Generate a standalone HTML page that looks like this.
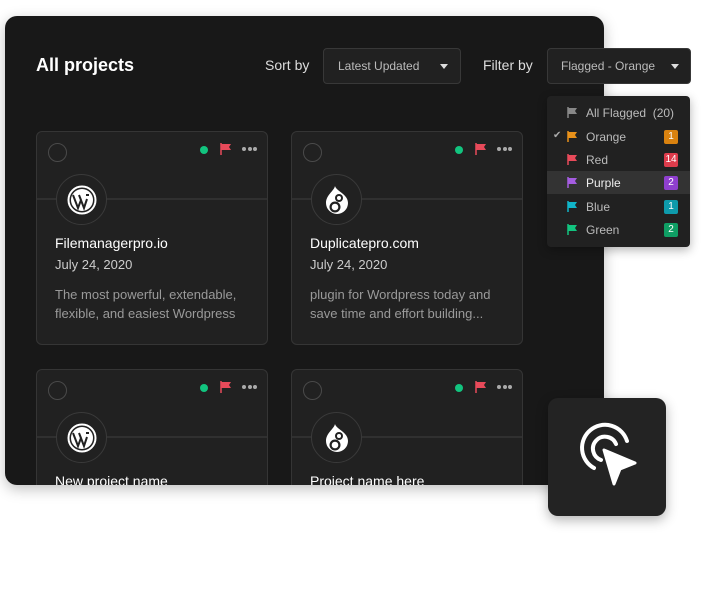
<!DOCTYPE html>
<html><head><meta charset="utf-8"><style>
*{box-sizing:border-box;margin:0;padding:0}
body{width:725px;height:615px;background:#fff;position:relative;overflow:hidden;font-family:"Liberation Sans",sans-serif}
.panel{position:absolute;left:5px;top:16px;width:599px;height:469px;background:#181818;border-radius:12px;overflow:hidden;box-shadow:0 4px 14px rgba(0,0,0,.25)}
.abs{position:absolute}
.card{position:absolute;width:232px;height:214px;background:#212121;border:1px solid #353535;border-radius:6px}
.chk{position:absolute;left:11px;top:11px;width:19px;height:19px;border:1.5px solid #4a4a4a;border-radius:50%}
.dot{position:absolute;left:163px;top:14px;width:8px;height:8px;border-radius:50%;background:#12c47f}
.flag{position:absolute;left:183px;top:11px}
.more{position:absolute;left:205px;top:15px;display:flex;gap:1.5px;height:4px}
.more i{display:block;width:4px;height:4px;border-radius:50%;background:#aaa}
.line{position:absolute;left:0;right:0;top:66px;height:2px;background:#303030}
.logo{position:absolute;left:19px;top:42px;width:51px;height:51px;border-radius:50%;border:1px solid #3a3a3a;background:#212121;display:flex;align-items:center;justify-content:center}
.t{position:absolute;left:18px;top:103px;color:#fff;font-size:14px}
.d{position:absolute;left:18px;top:125px;color:#ccc;font-size:13px}
.p{position:absolute;left:18px;top:153px;color:#9a9a9a;font-size:13px;line-height:19px}
.btn{position:absolute;background:#212121;border:1px solid #383838;border-radius:4px;color:#bbb;font-size:12px}
.menu{position:absolute;left:547px;top:96px;width:143px;height:151px;background:#212121;border-radius:4px;box-shadow:0 3px 10px rgba(0,0,0,.3)}
.it{position:absolute;left:0;width:143px;height:23px;font-size:12px;color:#bbb}
.it span.n{position:absolute;left:39px;top:5px}
.it svg{position:absolute;left:20px;top:6px}
.b{position:absolute;left:117px;top:5px;width:14px;height:14px;border-radius:2px;color:#fff;font-size:10px;text-align:center;line-height:14px}
</style></head><body>
<div class="panel">
<div class="abs" style="left:31px;top:39px;color:#fff;font-size:18px;font-weight:bold">All projects</div>
<div class="abs" style="left:260px;top:41px;color:#ddd;font-size:14px">Sort by</div>
<div class="abs" style="left:478px;top:41px;color:#ddd;font-size:14px">Filter by</div>
</div>
<div class="btn" style="left:323px;top:48px;width:138px;height:36px"><span class="abs" style="left:14px;top:10px">Latest Updated</span><span class="abs" style="left:116px;top:15px;width:0;height:0;border-left:4px solid transparent;border-right:4px solid transparent;border-top:5px solid #ddd"></span></div>
<div class="btn" style="left:547px;top:48px;width:144px;height:36px"><span class="abs" style="left:13px;top:10px">Flagged - Orange</span><span class="abs" style="left:123px;top:15px;width:0;height:0;border-left:4px solid transparent;border-right:4px solid transparent;border-top:5px solid #ddd"></span></div>

<div class="card" style="left:36px;top:131px">
<div class="chk"></div><div class="dot"></div>
<svg class="flag" width="11" height="12"><path d="M1 0v12" stroke="#e84a5a" stroke-width="1.5"/><path d="M1 1h10l-2 3 2 3H1z" fill="#e84a5a"/></svg>
<div class="more"><i></i><i></i><i></i></div><div class="line"></div>
<div class="logo"><svg width="30" height="30" viewBox="0 0 30 30"><circle cx="15" cy="15" r="13.5" fill="none" stroke="#fff" stroke-width="2"/><circle cx="15" cy="15" r="11" fill="#fff"/><path d="M6 10l5 13 3-8-2-5M12 10l5 13 3-9M19 10l3 0" stroke="#212121" stroke-width="2" fill="none"/></svg></div>
<div class="t">Filemanagerpro.io</div><div class="d">July 24, 2020</div>
<div class="p">The most powerful, extendable,<br>flexible, and easiest Wordpress</div>
</div>
<div class="card" style="left:291px;top:131px">
<div class="chk"></div><div class="dot"></div>
<svg class="flag" width="11" height="12"><path d="M1 0v12" stroke="#e84a5a" stroke-width="1.5"/><path d="M1 1h10l-2 3 2 3H1z" fill="#e84a5a"/></svg>
<div class="more"><i></i><i></i><i></i></div><div class="line"></div>
<div class="logo"><svg width="28" height="30" viewBox="0 0 28 30"><path d="M12 1c1 5 13 8 13 17a11 11 0 0 1-22 0C3 10 11 6 12 1z" fill="#fff"/><circle cx="16" cy="13" r="4" fill="#212121"/><circle cx="12" cy="22" r="5.5" fill="#212121"/><circle cx="16" cy="13" r="2" fill="#fff"/><circle cx="12" cy="22" r="3.3" fill="#fff"/></svg></div>
<div class="t">Duplicatepro.com</div><div class="d">July 24, 2020</div>
<div class="p">plugin for Wordpress today and<br>save time and effort building...</div>
</div>
<div style="position:absolute;left:5px;top:360px;width:599px;height:125px;overflow:hidden;border-radius:0 0 12px 12px">
<div class="card" style="left:31px;top:9px">
<div class="chk"></div><div class="dot"></div>
<svg class="flag" width="11" height="12"><path d="M1 0v12" stroke="#e84a5a" stroke-width="1.5"/><path d="M1 1h10l-2 3 2 3H1z" fill="#e84a5a"/></svg>
<div class="more"><i></i><i></i><i></i></div><div class="line"></div>
<div class="logo"><svg width="30" height="30" viewBox="0 0 30 30"><circle cx="15" cy="15" r="13.5" fill="none" stroke="#fff" stroke-width="2"/><circle cx="15" cy="15" r="11" fill="#fff"/><path d="M6 10l5 13 3-8-2-5M12 10l5 13 3-9M19 10l3 0" stroke="#212121" stroke-width="2" fill="none"/></svg></div>
<div class="t">New project name</div>
</div>
<div class="card" style="left:286px;top:9px">
<div class="chk"></div><div class="dot"></div>
<svg class="flag" width="11" height="12"><path d="M1 0v12" stroke="#e84a5a" stroke-width="1.5"/><path d="M1 1h10l-2 3 2 3H1z" fill="#e84a5a"/></svg>
<div class="more"><i></i><i></i><i></i></div><div class="line"></div>
<div class="logo"><svg width="28" height="30" viewBox="0 0 28 30"><path d="M12 1c1 5 13 8 13 17a11 11 0 0 1-22 0C3 10 11 6 12 1z" fill="#fff"/><circle cx="16" cy="13" r="4" fill="#212121"/><circle cx="12" cy="22" r="5.5" fill="#212121"/><circle cx="16" cy="13" r="2" fill="#fff"/><circle cx="12" cy="22" r="3.3" fill="#fff"/></svg></div>
<div class="t">Project name here</div>
</div>
</div>

<div class="menu">
<div class="it" style="top:5px"><svg width="10" height="11"><path d="M1 0v11" stroke="#888" stroke-width="1.5"/><path d="M1 1h9l-2 3 2 3H1z" fill="#888"/></svg><span class="n">All Flagged&nbsp; (20)</span></div>
<div class="it" style="top:29px"><span class="abs" style="left:6px;top:5px;color:#aaa;font-size:10px">✔</span><svg width="10" height="11"><path d="M1 0v11" stroke="#e8911a" stroke-width="1.5"/><path d="M1 1h9l-2 3 2 3H1z" fill="#e8911a"/></svg><span class="n">Orange</span><span class="b" style="background:#d9820f">1</span></div>
<div class="it" style="top:52px"><svg width="10" height="11"><path d="M1 0v11" stroke="#e84a5a" stroke-width="1.5"/><path d="M1 1h9l-2 3 2 3H1z" fill="#e84a5a"/></svg><span class="n">Red</span><span class="b" style="background:#dd3c4c">14</span></div>
<div class="it" style="top:75px;background:#333;color:#eee"><svg width="10" height="11"><path d="M1 0v11" stroke="#a45ce0" stroke-width="1.5"/><path d="M1 1h9l-2 3 2 3H1z" fill="#a45ce0"/></svg><span class="n">Purple</span><span class="b" style="background:#8f3fcf">2</span></div>
<div class="it" style="top:99px"><svg width="10" height="11"><path d="M1 0v11" stroke="#11b5c9" stroke-width="1.5"/><path d="M1 1h9l-2 3 2 3H1z" fill="#11b5c9"/></svg><span class="n">Blue</span><span class="b" style="background:#0e9aab">1</span></div>
<div class="it" style="top:122px"><svg width="10" height="11"><path d="M1 0v11" stroke="#12c47f" stroke-width="1.5"/><path d="M1 1h9l-2 3 2 3H1z" fill="#12c47f"/></svg><span class="n">Green</span><span class="b" style="background:#0f9e64">2</span></div>
</div>

<div class="abs" style="left:548px;top:398px;width:118px;height:118px;background:#232323;border-radius:10px;box-shadow:0 4px 12px rgba(0,0,0,.3)">
<svg width="118" height="118" viewBox="0 0 118 118"><path d="M46 70A23 23 0 1 1 79 43" fill="none" stroke="#fff" stroke-width="4" stroke-linecap="round"/><path d="M53 62A12 12 0 1 1 68 46" fill="none" stroke="#fff" stroke-width="4" stroke-linecap="round"/><path d="M56 52L87 65 72 71 66 86z" fill="#fff" stroke="#fff" stroke-width="3" stroke-linejoin="round"/></svg>
</div>
</body></html>
